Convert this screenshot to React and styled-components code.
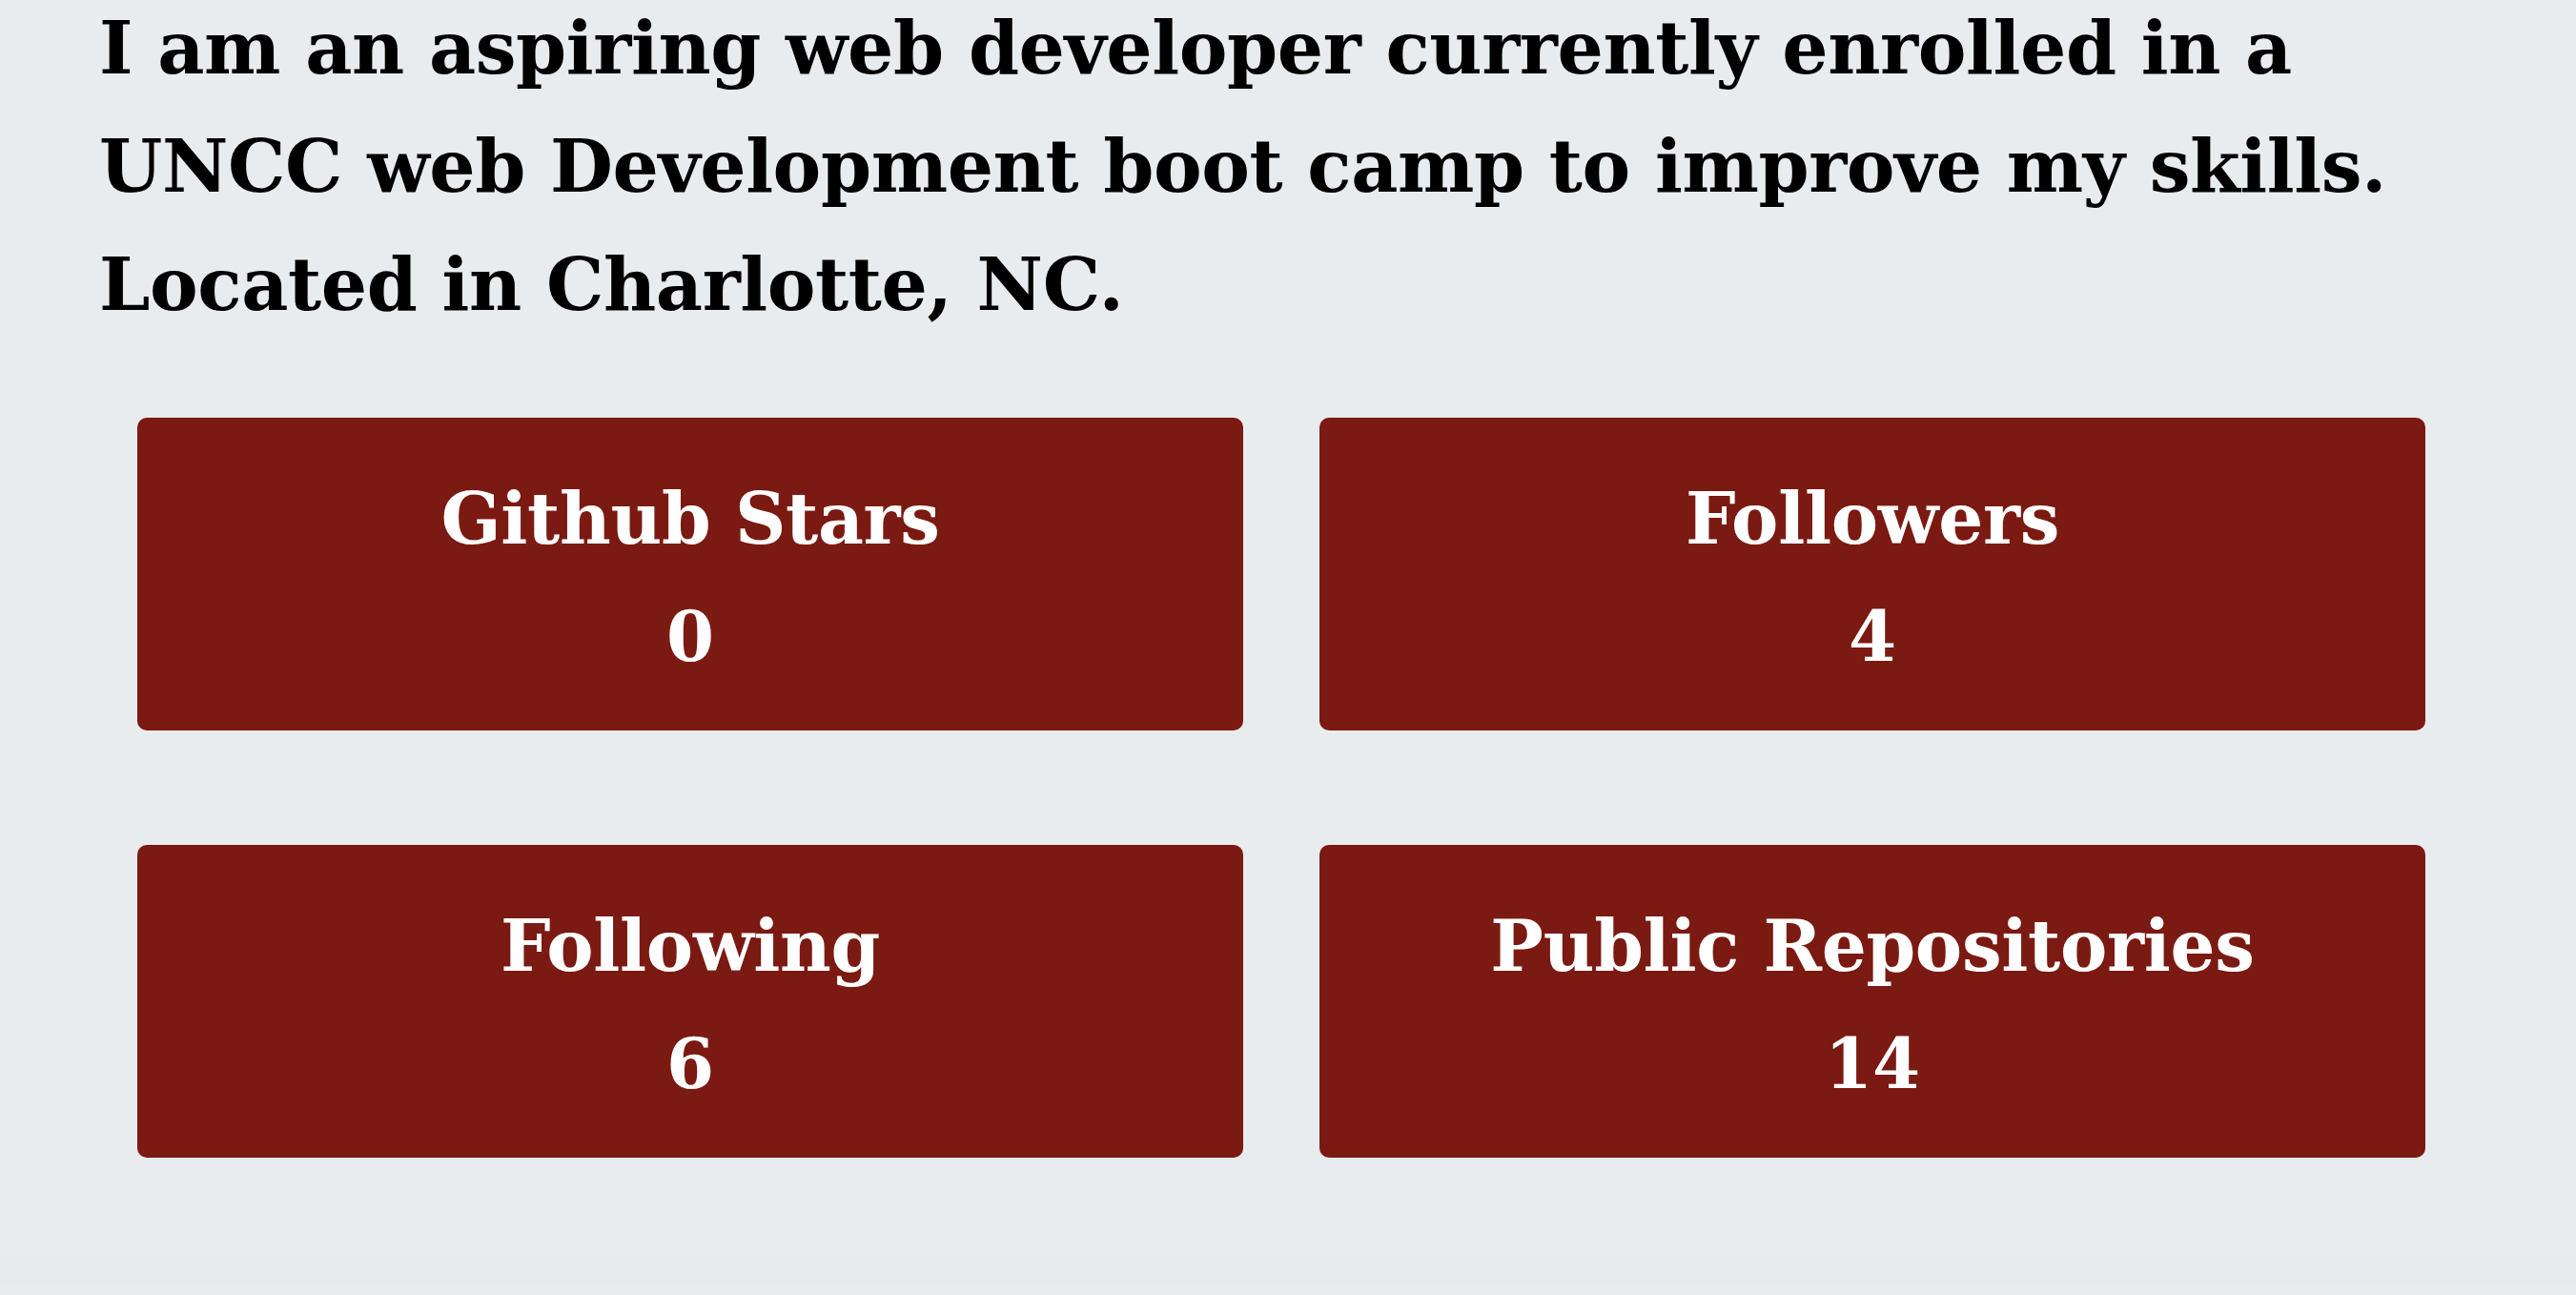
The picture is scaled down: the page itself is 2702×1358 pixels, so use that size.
import styled, { createGlobalStyle } from "styled-components";

const GlobalStyle = createGlobalStyle`
  * {
    box-sizing: border-box;
  }

  body {
    margin: 0;
    background-color: #e8ecee;
    font-family: "DejaVu Serif", "Liberation Serif", serif;
    overflow: hidden;
  }
`;

const Page = styled.main`
  min-height: 100vh;
  padding: 0 0 0 104px;
  background: linear-gradient(
    to bottom,
    #e8ecee 0%,
    #e8ecee 97%,
    #e5e9ea 100%
  );
`;

const Bio = styled.p`
  margin: -11px 0 0;
  font-size: 76px;
  line-height: 124px;
  letter-spacing: -0.4px;
  font-weight: bold;
  color: #000;
`;

const StatsGrid = styled.section`
  display: grid;
  grid-template-columns: repeat(2, 1160px);
  column-gap: 80px;
  row-gap: 120px;
  margin: 77px 0 0 40px;
`;

const StatCard = styled.div`
  display: flex;
  flex-direction: column;
  align-items: center;
  gap: 51px;
  height: 328px;
  padding: 69px 0 62px;
  background-color: #7b1a12;
  border-radius: 10px;
  color: #fff;
`;

const StatTitle = styled.h3`
  margin: 0;
  font-size: 74px;
  line-height: 74px;
  letter-spacing: -0.3px;
  font-weight: bold;
`;

const StatValue = styled.span`
  font-size: 72px;
  line-height: 72px;
  font-weight: bold;
`;

const stats = [
  { title: "Github Stars", value: 0 },
  { title: "Followers", value: 4 },
  { title: "Following", value: 6 },
  { title: "Public Repositories", value: 14 },
];

const App = () => {
  return (
    <>
      <GlobalStyle />
      <Page>
        <Bio>
          I am an aspiring web developer currently enrolled in a
          <br />
          UNCC web Development boot camp to improve my skills.
          <br />
          Located in Charlotte, NC.
        </Bio>

        <StatsGrid>
          {stats.map((stat) => (
            <StatCard key={stat.title}>
              <StatTitle>{stat.title}</StatTitle>
              <StatValue>{stat.value}</StatValue>
            </StatCard>
          ))}
        </StatsGrid>
      </Page>
    </>
  );
};

export default App;
